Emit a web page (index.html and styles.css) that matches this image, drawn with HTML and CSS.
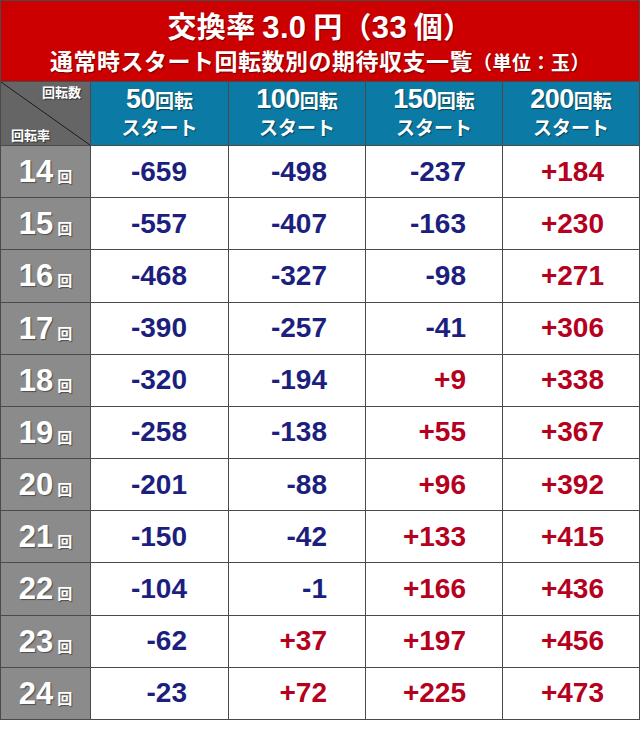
FILE: index.html
```html
<!DOCTYPE html>
<html lang="ja">
<head>
<meta charset="utf-8">
<link rel="stylesheet" href="styles.css">
</head>
<body>
<div class="table">
  <div class="title">
    <div class="t1">交換率 <span class="num">3.0</span> 円（<span class="num">33</span> 個）</div>
    <div class="t2">通常時スタート回転数別の期待収支一覧<span class="unit">（単位：玉）</span></div>
  </div>

  <div class="corner"><span class="ctop">回転数</span><span class="cbot">回転率</span></div>
  <div class="head"><div class="hl"><span class="hn">50</span>回転</div><div class="hl">スタート</div></div>
  <div class="head"><div class="hl"><span class="hn">100</span>回転</div><div class="hl">スタート</div></div>
  <div class="head"><div class="hl"><span class="hn">150</span>回転</div><div class="hl">スタート</div></div>
  <div class="head"><div class="hl"><span class="hn">200</span>回転</div><div class="hl">スタート</div></div>

  <div class="lab"><span class="ln">14</span><span class="lk">回</span></div>
  <div class="cell c1 neg">-659</div><div class="cell c2 neg">-498</div><div class="cell c3 neg">-237</div><div class="cell c4 pos">+184</div>
  <div class="lab"><span class="ln">15</span><span class="lk">回</span></div>
  <div class="cell c1 neg">-557</div><div class="cell c2 neg">-407</div><div class="cell c3 neg">-163</div><div class="cell c4 pos">+230</div>
  <div class="lab"><span class="ln">16</span><span class="lk">回</span></div>
  <div class="cell c1 neg">-468</div><div class="cell c2 neg">-327</div><div class="cell c3 neg">-98</div><div class="cell c4 pos">+271</div>
  <div class="lab"><span class="ln">17</span><span class="lk">回</span></div>
  <div class="cell c1 neg">-390</div><div class="cell c2 neg">-257</div><div class="cell c3 neg">-41</div><div class="cell c4 pos">+306</div>
  <div class="lab"><span class="ln">18</span><span class="lk">回</span></div>
  <div class="cell c1 neg">-320</div><div class="cell c2 neg">-194</div><div class="cell c3 pos">+9</div><div class="cell c4 pos">+338</div>
  <div class="lab"><span class="ln">19</span><span class="lk">回</span></div>
  <div class="cell c1 neg">-258</div><div class="cell c2 neg">-138</div><div class="cell c3 pos">+55</div><div class="cell c4 pos">+367</div>
  <div class="lab"><span class="ln">20</span><span class="lk">回</span></div>
  <div class="cell c1 neg">-201</div><div class="cell c2 neg">-88</div><div class="cell c3 pos">+96</div><div class="cell c4 pos">+392</div>
  <div class="lab"><span class="ln">21</span><span class="lk">回</span></div>
  <div class="cell c1 neg">-150</div><div class="cell c2 neg">-42</div><div class="cell c3 pos">+133</div><div class="cell c4 pos">+415</div>
  <div class="lab"><span class="ln">22</span><span class="lk">回</span></div>
  <div class="cell c1 neg">-104</div><div class="cell c2 neg">-1</div><div class="cell c3 pos">+166</div><div class="cell c4 pos">+436</div>
  <div class="lab"><span class="ln">23</span><span class="lk">回</span></div>
  <div class="cell c1 neg">-62</div><div class="cell c2 pos">+37</div><div class="cell c3 pos">+197</div><div class="cell c4 pos">+456</div>
  <div class="lab"><span class="ln">24</span><span class="lk">回</span></div>
  <div class="cell c1 neg">-23</div><div class="cell c2 pos">+72</div><div class="cell c3 pos">+225</div><div class="cell c4 pos">+473</div>
</div>
</body>
</html>
```

FILE: styles.css
```css
html, body {
  margin: 0;
  padding: 0;
  background: #ffffff;
}

body {
  font-family: "Liberation Sans", "Noto Sans CJK JP", sans-serif;
}

.table {
  width: 640px;
  height: 720px;
  box-sizing: border-box;
  padding: 1px;
  background: #4a4a4a;
  display: grid;
  grid-template-columns: 89px 137px 136px 136px 136px;
  grid-template-rows: 80px 63px repeat(11, 1fr);
  gap: 1px;
}

.title {
  grid-column: 1 / -1;
  background: #cc0000;
  color: #ffffff;
  font-weight: bold;
  display: flex;
  flex-direction: column;
  align-items: center;
  justify-content: center;
  text-shadow: 1px 1px 1px rgba(60, 0, 0, 0.6);
}

.t1 {
  font-family: "Noto Sans CJK JP", sans-serif;
  font-size: 29px;
  line-height: 34px;
  margin-top: 2px;
  letter-spacing: 0.3px;
}

.t1 .num {
  font-family: "Liberation Sans", sans-serif;
  font-size: 31px;
}

.t2 {
  font-family: "Noto Sans CJK JP", sans-serif;
  font-size: 23px;
  line-height: 30px;
  letter-spacing: 0.5px;
}

.t2 .unit {
  font-size: 19px;
  letter-spacing: 0.5px;
}

.corner {
  background: linear-gradient(to top right, #656565 calc(50% - 0.8px), #1a1a1a 50%, #656565 calc(50% + 0.8px));
  color: #ffffff;
  font-family: "Noto Sans CJK JP", sans-serif;
  font-weight: bold;
  font-size: 13px;
  line-height: 18px;
  display: flex;
  flex-direction: column;
  justify-content: space-between;
  padding: 1px 9px 1px 10px;
  text-shadow: 1px 1px 1px rgba(0, 0, 0, 0.5);
}

.ctop {
  align-self: flex-end;
}

.cbot {
  align-self: flex-start;
}

.head {
  background: #0b7aa5;
  color: #ffffff;
  font-family: "Noto Sans CJK JP", sans-serif;
  font-weight: bold;
  font-size: 19px;
  display: flex;
  flex-direction: column;
  align-items: center;
  justify-content: center;
  padding-bottom: 1px;
  text-shadow: 1px 1px 1px rgba(0, 0, 0, 0.45);
}

.hl {
  line-height: 28px;
  height: 28px;
}

.head .hn {
  font-family: "Liberation Sans", sans-serif;
  font-size: 27px;
  line-height: 28px;
  letter-spacing: -0.5px;
}

.lab {
  background: #8b8b8b;
  color: #ffffff;
  font-weight: bold;
  display: flex;
  align-items: baseline;
  justify-content: center;
  padding-top: 13px;
  box-sizing: border-box;
  text-shadow: 1px 1px 1px rgba(0, 0, 0, 0.45);
}

.ln {
  font-family: "Liberation Sans", sans-serif;
  font-size: 31px;
  line-height: 26px;
}

.lk {
  font-family: "Noto Sans CJK JP", sans-serif;
  font-size: 15px;
  line-height: 20px;
  margin-left: 4px;
}

.cell {
  background: #ffffff;
  font-family: "Liberation Sans", sans-serif;
  font-weight: bold;
  font-size: 28px;
  display: flex;
  align-items: center;
  justify-content: flex-end;
}

.c1 { padding-right: 41px; }
.c2 { padding-right: 38px; }
.c3 { padding-right: 36px; }
.c4 { padding-right: 35px; }

.neg { color: #1d1f7e; }
.pos { color: #b5001e; }
```
